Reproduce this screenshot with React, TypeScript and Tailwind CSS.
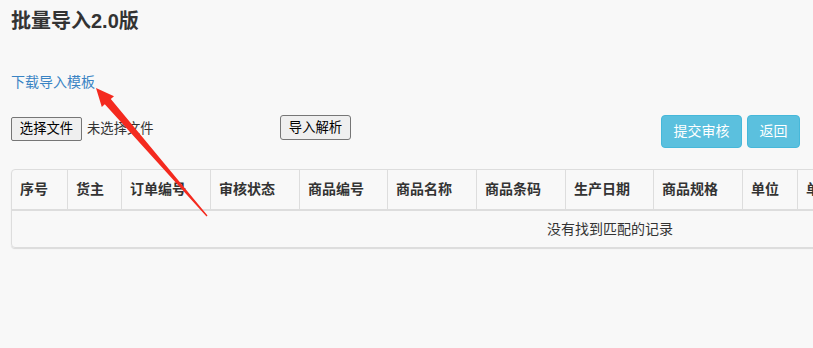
import React from "react";

const columns = [
  { name: "序号", w: 55 },
  { name: "货主", w: 54 },
  { name: "订单编号", w: 89 },
  { name: "审核状态", w: 89 },
  { name: "商品编号", w: 88 },
  { name: "商品名称", w: 89 },
  { name: "商品条码", w: 89 },
  { name: "生产日期", w: 88 },
  { name: "商品规格", w: 89 },
  { name: "单位", w: 55 },
  { name: "单价", w: 55 },
  { name: "数量", w: 55 },
  { name: "生产批号", w: 89 },
  { name: "有效期至", w: 89 },
  { name: "备注", w: 125 },
];

const font = { fontFamily: '"Liberation Sans", "Noto Sans CJK SC", sans-serif' };

const App = () => (
  <div
    className="relative w-[813px] h-[348px] overflow-hidden bg-[#f8f8f8] text-[#333]"
    style={font}
  >
    <div className="pl-[11px]">
      <h3 className="pt-[7px] text-[20px] leading-[28px] font-bold">批量导入2.0版</h3>

      <a className="block mt-[37px] text-[14px] leading-[20px] text-[#3a84c4] w-fit">
        下载导入模板
      </a>

      <div className="mt-[23px] flex items-start pr-[13px]">
        <div className="w-[269px] pt-[2px] flex items-center">
          <button className="h-[24px] w-[71px] text-[13.33px] bg-[#efefef] border border-[#767676] rounded-[2px] text-black">
            选择文件
          </button>
          <span className="ml-[5px] text-[13.33px]">未选择文件</span>
        </div>
        <button className="h-[25px] w-[71px] text-[13.33px] bg-[#efefef] border border-[#767676] rounded-[3px] text-black">
          导入解析
        </button>
        <div className="ml-auto flex gap-[5px]">
          <button className="h-[33px] w-[81px] text-[14px] text-white bg-[#5bc0de] border border-[#46b8da] rounded-[4px]">
            提交审核
          </button>
          <button className="h-[33px] w-[53px] text-[14px] text-white bg-[#5bc0de] border border-[#46b8da] rounded-[4px]">
            返回
          </button>
        </div>
      </div>

      <div className="mt-[21px] w-[1198px] border border-[#ddd] rounded-[4px] shadow-[0_1px_1px_rgba(0,0,0,0.12)]">
        <div className="flex border-b-2 border-[#ddd]">
          {columns.map((c, i) => (
            <div
              key={c.name}
              className={
                "h-[39px] px-2 flex items-center text-[14px] font-bold shrink-0 " +
                (i > 0 ? "border-l border-[#ddd]" : "")
              }
              style={{ width: c.w }}
            >
              {c.name}
            </div>
          ))}
        </div>
        <div className="h-[36px] flex items-center justify-center text-[14px]">
          没有找到匹配的记录
        </div>
      </div>
    </div>

    <svg
      className="absolute left-0 top-0 pointer-events-none"
      width="813"
      height="348"
      viewBox="0 0 813 348"
    >
      <polygon
        points="96,88 114,96.3 110.8,99 207.5,215.5 206.5,216.5 104.8,104.2 101.8,107"
        fill="#f42a1f"
      />
    </svg>
  </div>
);

export default App;
